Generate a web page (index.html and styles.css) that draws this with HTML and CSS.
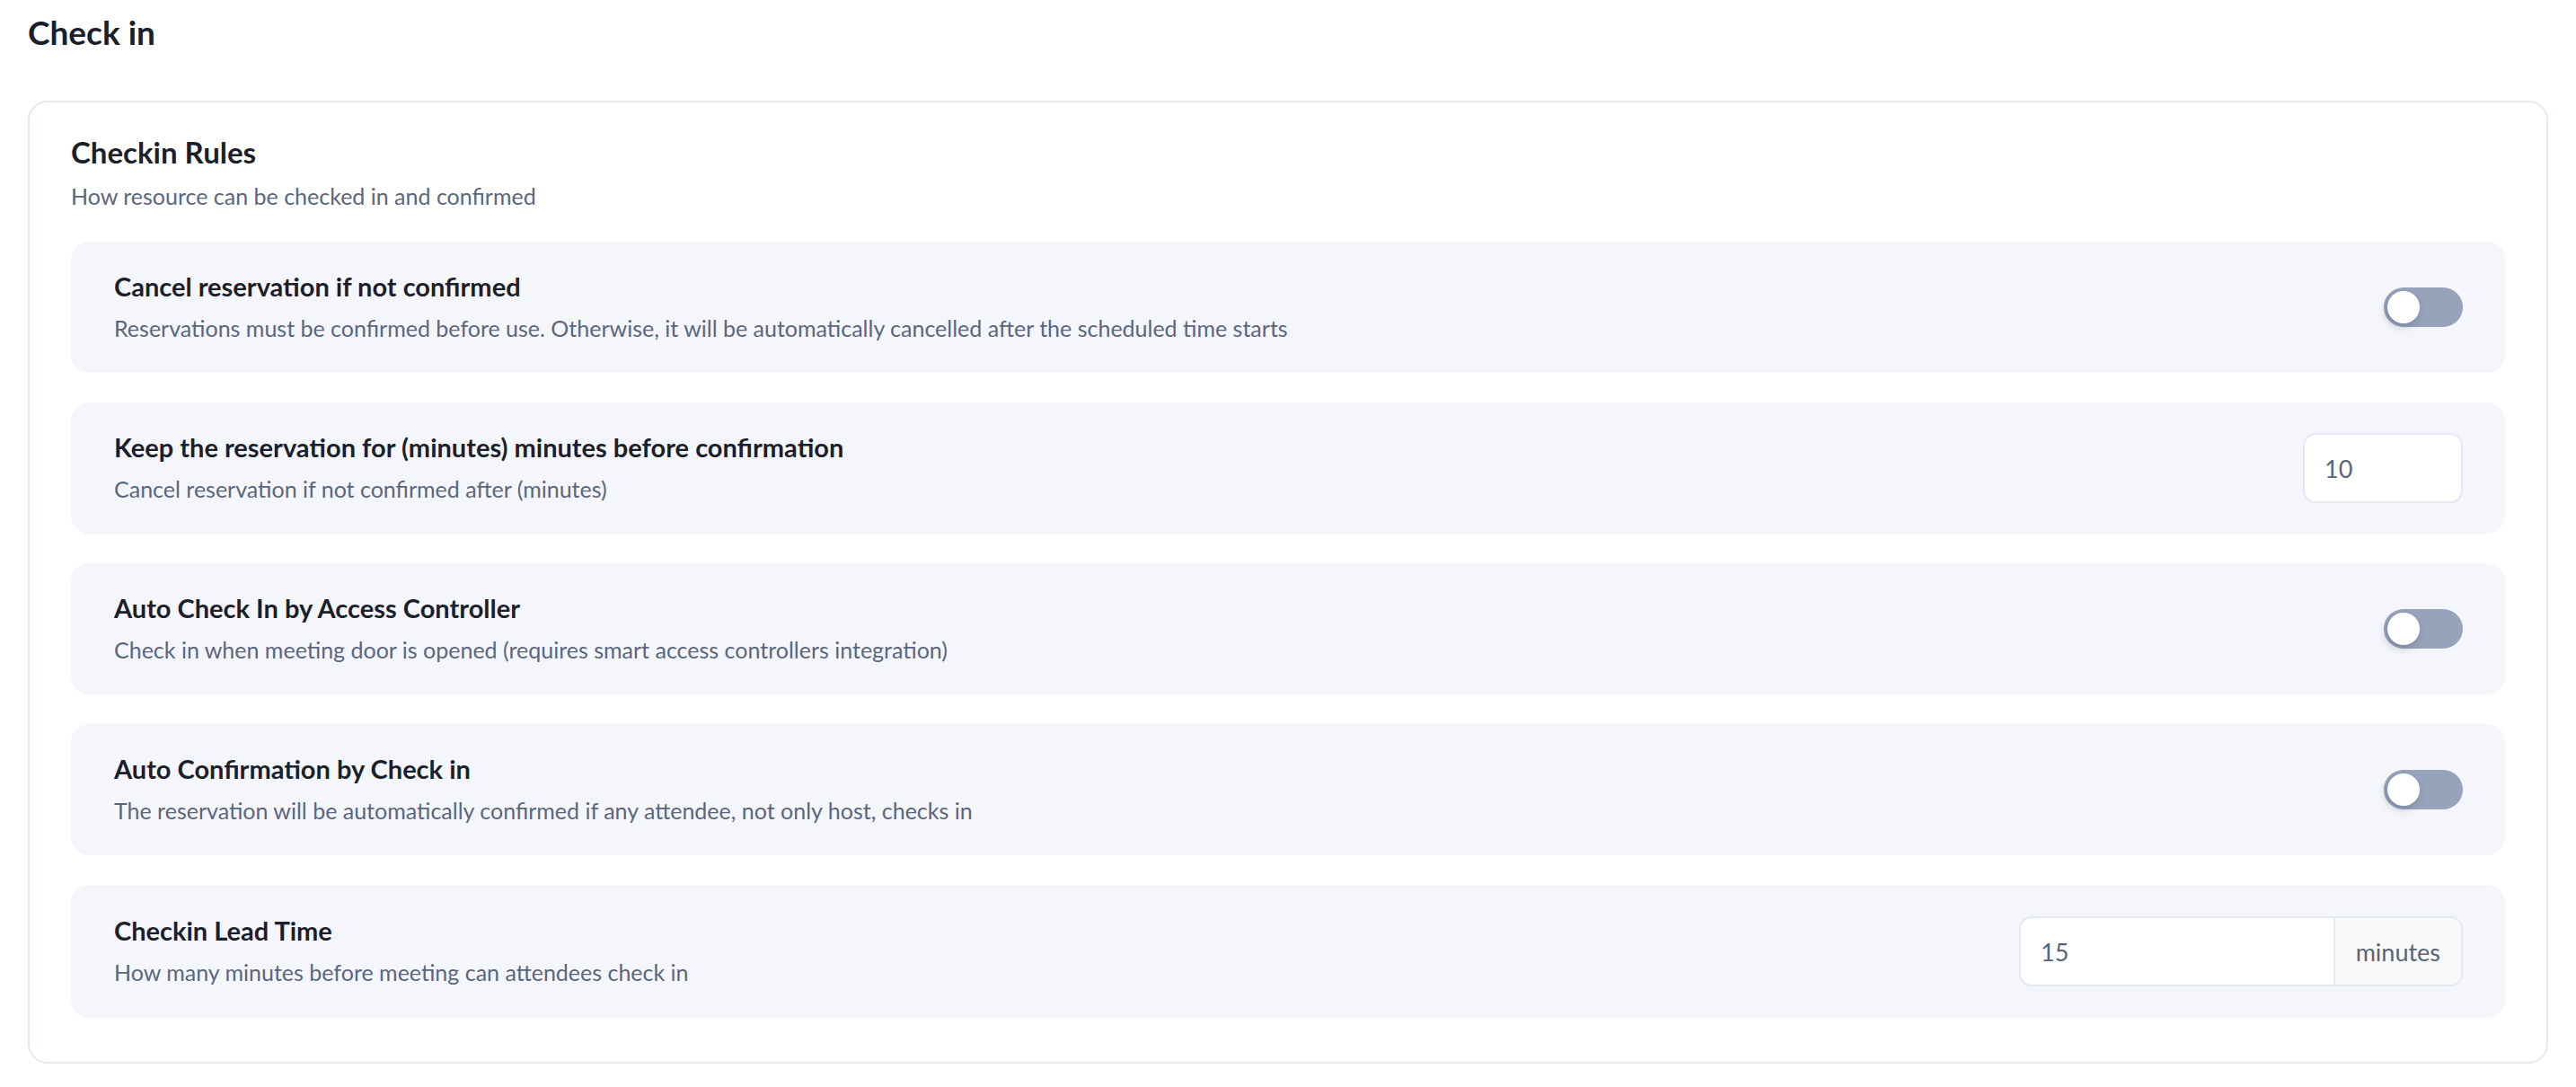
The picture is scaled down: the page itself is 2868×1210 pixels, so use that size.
FILE: index.html
```html
<!DOCTYPE html>
<html lang="en">
<head>
<meta charset="utf-8">
<title>Check in</title>
<link rel="stylesheet" href="styles.css">
</head>
<body>
<main class="page">
  <h1 class="page-title">Check in</h1>
  <section class="card">
    <header class="card-head">
      <h2 class="card-title">Checkin Rules</h2>
      <p class="card-sub">How resource can be checked in and confirmed</p>
    </header>
    <div class="rules">
      <div class="rule">
        <div class="rule-text">
          <div class="rule-title">Cancel reservation if not confirmed</div>
          <div class="rule-desc">Reservations must be confirmed before use. Otherwise, it will be automatically cancelled after the scheduled time starts</div>
        </div>
        <span class="toggle"><span class="knob"></span></span>
      </div>
      <div class="rule">
        <div class="rule-text">
          <div class="rule-title">Keep the reservation for (minutes) minutes before confirmation</div>
          <div class="rule-desc">Cancel reservation if not confirmed after (minutes)</div>
        </div>
        <div class="field field-small"><span class="field-value">10</span></div>
      </div>
      <div class="rule">
        <div class="rule-text">
          <div class="rule-title">Auto Check In by Access Controller</div>
          <div class="rule-desc">Check in when meeting door is opened (requires smart access controllers integration)</div>
        </div>
        <span class="toggle"><span class="knob"></span></span>
      </div>
      <div class="rule">
        <div class="rule-text">
          <div class="rule-title">Auto Confirmation by Check in</div>
          <div class="rule-desc">The reservation will be automatically confirmed if any attendee, not only host, checks in</div>
        </div>
        <span class="toggle"><span class="knob"></span></span>
      </div>
      <div class="rule rule-last">
        <div class="rule-text">
          <div class="rule-title">Checkin Lead Time</div>
          <div class="rule-desc">How many minutes before meeting can attendees check in</div>
        </div>
        <div class="field field-group">
          <span class="field-value field-grow">15</span>
          <span class="field-addon">minutes</span>
        </div>
      </div>
    </div>
  </section>
</main>
</body>
</html>
```
FILE: styles.css
```css
* { box-sizing: border-box; }
html, body { margin: 0; padding: 0; background: #ffffff; }
body {
  font-family: Lato, "Noto Sans", "Liberation Sans", sans-serif;
  color: #1b1f2b;
}
.page {
  padding: 12px 31px 27px 31px;
}
.page-title {
  margin: 0;
  font-size: 37px;
  line-height: 48px;
  font-weight: 700;
  color: #1b1f2b;
}
.card {
  margin-top: 52px;
  border: 2px solid #e4e8ef;
  border-radius: 22px;
  padding: 35px 46px 49px 46px;
}
.card-head { margin-bottom: 33px; }
.card-title {
  margin: 0;
  font-size: 33px;
  line-height: 40px;
  font-weight: 700;
  color: #1b1f2b;
}
.card-sub {
  margin: 11px 0 0 0;
  font-size: 25px;
  line-height: 36px;
  color: #5a6680;
}
.rules {
  display: flex;
  flex-direction: column;
  gap: 33px;
}
.rule {
  display: flex;
  align-items: center;
  justify-content: space-between;
  background: #f5f6fb;
  border-radius: 20px;
  padding: 32px 47px 32px 48px;
  min-height: 146px;
}
.rule-last { min-height: 148px; }
.rule-text {
  display: flex;
  flex-direction: column;
  gap: 10px;
}
.rule-title {
  font-size: 29px;
  line-height: 36px;
  font-weight: 700;
  color: #1b1f2b;
}
.rule-desc {
  font-size: 25px;
  line-height: 36px;
  color: #5a6680;
}
.toggle {
  display: flex;
  align-items: center;
  width: 88px;
  height: 44px;
  padding: 4px;
  border-radius: 22px;
  background: #97a3bb;
}
.knob {
  width: 36px;
  height: 36px;
  border-radius: 50%;
  background: #ffffff;
  box-shadow: -2px 4px 8px rgba(40, 50, 80, 0.25);
}
.field {
  display: flex;
  align-items: stretch;
  height: 78px;
  background: #ffffff;
  border: 2px solid #e4e8ef;
  border-radius: 14px;
  overflow: hidden;
  font-size: 27px;
  color: #5a6478;
}
.field-small { width: 178px; }
.field-group { width: 494px; }
.field-value {
  display: flex;
  align-items: center;
  padding: 0 22px;
}
.field-grow { flex: 1; }
.field-addon {
  display: flex;
  align-items: center;
  padding: 0 23px;
  background: #f8f9fb;
  border-left: 2px solid #e4e8ef;
}
```
